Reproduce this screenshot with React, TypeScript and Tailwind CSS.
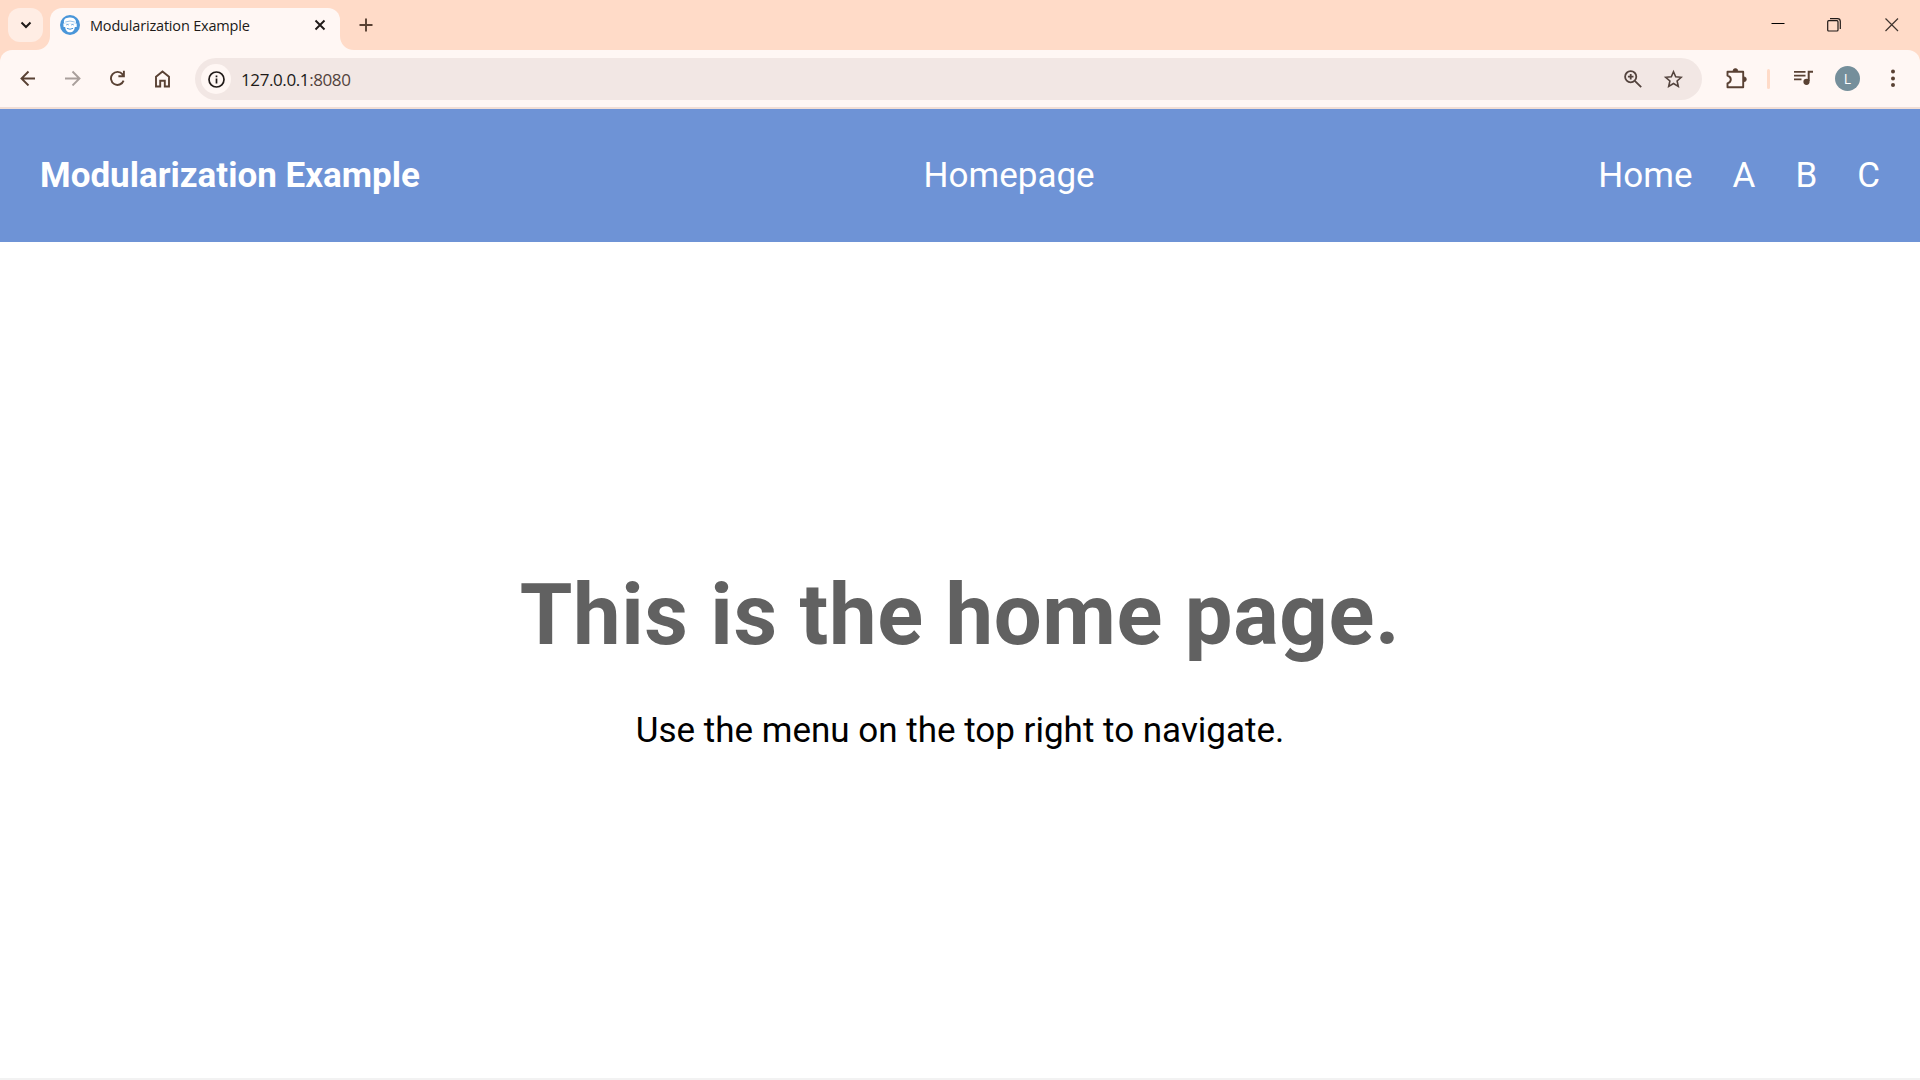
import type { ReactNode } from "react";

type IconProps = { w: number; h: number; className?: string; children: ReactNode };

function Icon({ w, h, className = "", children }: IconProps) {
  return (
    <svg width={w} height={h} viewBox={`0 0 ${w} ${h}`} fill="none" className={`block shrink-0 ${className}`}>
      {children}
    </svg>
  );
}

function Favicon() {
  return (
    <Icon w={20} h={20}>
      <circle cx="10" cy="10" r="10" fill="#4a96d9" />
      <path d="M4.4 8.800C3 5.600 4.800 2.900 8 2.800c3.600-.9 6.800.3 7.600 2.500.5 1.400.4 2.500-.1 3.500z" fill="#fff" />
      <path d="M3.300 8.500h13.400V12h-1.900c-.1 3-2 5.300-4.800 5.300S5.300 15 5.200 12H3.600z" fill="#fff" />
      <path d="M6.300 9.900q1.200-.8 2.400 0M11.300 9.900q1.200-.8 2.400 0M6.900 13.300q3.100 1.900 6.200 0" stroke="#4a96d9" strokeWidth="1" />
      <path d="M5.300 7q4.700-1.900 9.400 0" stroke="#8bbbe6" strokeWidth=".9" />
    </Icon>
  );
}

function TabStrip() {
  return (
    <div className="flex h-[50px] bg-[#ffdbc8]">
      <button className="ml-2 mt-2 flex h-[34px] w-[35px] shrink-0 items-center justify-center rounded-xl bg-[#ffede4]">
        <Icon w={12} h={8}>
          <path d="M1.500 1.500 6 6l4.500-4.500" stroke="#201a18" strokeWidth="2" />
        </Icon>
      </button>
      <div className="relative ml-[7px] mt-2 flex h-[42px] w-[290px] shrink-0 items-start rounded-t-xl bg-[#fff7f4]">
        <svg width="14" height="14" className="absolute -left-3.5 bottom-0">
          <path d="M14 0v14H0C8 14 14 8 14 0z" fill="#fff7f4" />
        </svg>
        <svg width="14" height="14" className="absolute -right-3.5 bottom-0">
          <path d="M0 0v14h14C6 14 0 8 0 0z" fill="#fff7f4" />
        </svg>
        <div className="ml-2.5 mt-[7px]">
          <Favicon />
        </div>
        <span className="ml-2.5 mt-2 w-[224px] whitespace-nowrap font-['Open_Sans',sans-serif] text-[14.5px] leading-5 tracking-[-0.18px] text-[#201a18]">
          Modularization Example
        </span>
        <Icon w={12} h={12} className="mt-[11px]">
          <path d="m1.500 1.500 9 9m0-9-9 9" stroke="#201a18" strokeWidth="1.900" />
        </Icon>
      </div>
      <Icon w={14} h={14} className="ml-[19px] mt-[18px]">
        <path d="M7 .5v13M.5 7h13" stroke="#594133" strokeWidth="1.900" />
      </Icon>
      <div className="flex flex-1 justify-end">
        <Icon w={14} h={14} className="mt-[17px]">
          <path d="M.5 6.500h13" stroke="#000" />
        </Icon>
        <Icon w={14} h={14} className="ml-[42px] mt-[18px]">
          <rect x=".7" y="2.700" width="10.300" height="10.300" rx="1" stroke="#201a18" strokeWidth="1.200" />
          <path d="M3 .6h7.500q2.800 0 2.800 2.800V11" stroke="#201a18" strokeWidth="1.200" />
        </Icon>
        <Icon w={14} h={14} className="ml-11 mr-[21px] mt-[18px]">
          <path d="m.5.5 12.500 12.500m0-12.500L.5 13" stroke="#40352f" strokeWidth="1.200" />
        </Icon>
      </div>
    </div>
  );
}

function Toolbar() {
  return (
    <div className="bg-[#ffdbc8]">
      <div className="flex h-[59px] items-start rounded-t-xl border-b-2 border-[#f1ded6] bg-[#fff7f4]">
        <Icon w={16} h={16} className="ml-5 mt-5">
          <path d="M15 8.500H2M8.500 1.500l-7 7 7 7" stroke="#594133" strokeWidth="1.900" />
        </Icon>
        <Icon w={16} h={16} className="ml-[29px] mt-5">
          <path d="M0 8.500h13.500M7.500 1.500l7 7-7 7" stroke="#a99f9b" strokeWidth="1.900" />
        </Icon>
        <Icon w={16} h={16} className="ml-[28px] mt-5">
          <path d="M14.600 10.600a6.500 6.500 0 1 1-1-6.200l1.200 1.500M14.900.7v5.500H9.400" stroke="#594133" strokeWidth="1.900" />
        </Icon>
        <Icon w={15} h={18} className="ml-[30px] mt-5">
          <path d="M1 6.800 7.500 1.500 14 6.800v9.700H9.800v-5.700H5.200v5.700H1z" stroke="#594133" strokeWidth="1.900" />
        </Icon>
        <div className="ml-[25px] mt-2 flex h-[42px] w-[1507px] shrink-0 items-center rounded-full bg-[#f2e7e4]">
          <div className="ml-1.5 flex size-[30px] items-center justify-center rounded-full bg-[#fff7f4]">
            <Icon w={17} h={17}>
              <circle cx="8.500" cy="8.500" r="7.500" stroke="#201a18" strokeWidth="1.700" />
              <path d="M8.500 7.500v5M8.500 4.500v1.800" stroke="#201a18" strokeWidth="1.700" />
            </Icon>
          </div>
          <span className="ml-2.5 mt-0.5 flex-1 whitespace-nowrap font-['Open_Sans',sans-serif] text-[17px] tracking-[-0.4px] text-[#201a18]">
            127.0.0.1<span className="text-[#53433d]">:8080</span>
          </span>
          <Icon w={18} h={18}>
            <circle cx="6.700" cy="6.700" r="5.600" stroke="#53433d" strokeWidth="1.800" />
            <path d="m10.800 10.800 6.400 6.400M6.700 3.900v5.600M3.900 6.700h5.600" stroke="#53433d" strokeWidth="1.800" />
          </Icon>
          <Icon w={20} h={20} className="ml-[21px] mr-[19px]">
            <path d="m10.500 2.700 2.200 5.100 5.600.5-4.200 3.700 1.200 5.400-4.800-2.900-4.800 2.900L6.900 12 2.700 8.300l5.600-.5z" stroke="#53433d" strokeWidth="1.600" />
          </Icon>
        </div>
        <Icon w={21} h={21} className="ml-6 mt-[18px]">
          <path d="M1.500 3.800h15.700v15.400H1.500v-3.900c4.400-1.400 4.400-6.200 0-7.600z" stroke="#594133" strokeWidth="1.900" strokeLinejoin="round" />
          <path d="M7 3a2.400 2.400 0 0 1 4.800 0zM18 8.900a2.400 2.400 0 0 1 0 4.800z" fill="#594133" stroke="#594133" strokeWidth=".7" />
        </Icon>
        <div className="ml-5 mt-[19px] h-5 w-[3px] rounded-full bg-[#ffdbc8]" />
        <Icon w={20} h={16} className="ml-6 mt-5">
          <path d="M0 1.800h11.500M0 5.600h11.500M0 9.400h7.500" stroke="#594133" strokeWidth="1.800" />
          <path d="M19 1.800h-4.300V11" stroke="#594133" strokeWidth="2" />
          <circle cx="12.500" cy="11.800" r="3.100" fill="#594133" />
        </Icon>
        <div className="ml-[21px] mt-4 flex size-[25px] items-center justify-center rounded-full bg-[#758f9b] pt-px font-['Open_Sans',sans-serif] text-[14px] leading-none text-white">
          L
        </div>
        <Icon w={4} h={18} className="ml-[31px] mt-[19px]">
          <circle cx="2" cy="2.500" r="2" fill="#594133" />
          <circle cx="2" cy="9.500" r="2" fill="#594133" />
          <circle cx="2" cy="16" r="2" fill="#594133" />
        </Icon>
      </div>
    </div>
  );
}

export default function App() {
  return (
    <div className="flex h-screen flex-col overflow-hidden bg-white">
      <TabStrip />
      <Toolbar />
      <div className="flex min-h-0 flex-1 flex-col font-[Roboto,sans-serif] text-[35px] leading-[53px]">
        <header className="flex h-[133px] shrink-0 items-center justify-between bg-[#6e93d6] px-10 text-white">
          <span className="font-bold">Modularization Example</span>
          <span>Homepage</span>
          <nav className="flex gap-10">
            <a>Home</a>
            <a>A</a>
            <a>B</a>
            <a>C</a>
          </nav>
        </header>
        <main className="flex flex-1 flex-col items-center border-b-2 border-[#f2f2f2] pt-[323px]">
          <h1 className="text-[85px] leading-[100px] font-bold tracking-[0.625px] text-[#616161]">This is the home page.</h1>
          <p className="mt-[39px] text-black">Use the menu on the top right to navigate.</p>
        </main>
      </div>
    </div>
  );
}
